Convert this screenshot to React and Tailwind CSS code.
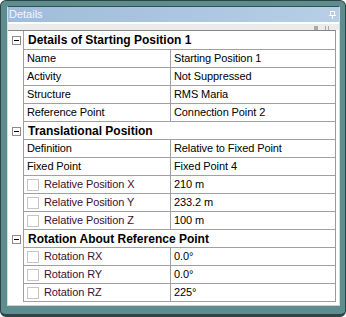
const sections = [
  {
    title: "Details of Starting Position 1",
    rows: [
      { name: "Name", value: "Starting Position 1" },
      { name: "Activity", value: "Not Suppressed" },
      { name: "Structure", value: "RMS Maria" },
      { name: "Reference Point", value: "Connection Point 2" },
    ],
  },
  {
    title: "Translational Position",
    rows: [
      { name: "Definition", value: "Relative to Fixed Point" },
      { name: "Fixed Point", value: "Fixed Point 4" },
      { name: "Relative Position X", value: "210 m", check: true },
      { name: "Relative Position Y", value: "233.2 m", check: true },
      { name: "Relative Position Z", value: "100 m", check: true },
    ],
  },
  {
    title: "Rotation About Reference Point",
    rows: [
      { name: "Rotation RX", value: "0.0°", check: true },
      { name: "Rotation RY", value: "0.0°", check: true },
      { name: "Rotation RZ", value: "225°", check: true },
    ],
  },
];

function MinusBox() {
  return (
    <div className="w-[9px] h-[9px] border border-[#8c8c8c] bg-white flex items-center justify-center">
      <div className="w-[5px] h-px bg-black" />
    </div>
  );
}

function PinIcon() {
  return (
    <svg width="7" height="8" viewBox="0 0 7 8" fill="none" stroke="#ffffff" strokeWidth="1" shapeRendering="crispEdges">
      <path d="M1.5 0.5h4v4h-4z" />
      <path d="M0 4.5h7" />
      <path d="M3.5 5v3" />
    </svg>
  );
}

function HeaderRow({ title, first }) {
  return (
    <div className={`flex ${first ? "h-[19px]" : "h-[18px]"}`}>
      <div className="w-[15px] shrink-0 flex items-center justify-end pr-[2px]">
        <MinusBox />
      </div>
      <div className="flex-1 flex items-center border-l border-b border-[#a0a0a0] pl-[4px] text-[12px] font-bold text-black leading-none">
        {title}
      </div>
    </div>
  );
}

function DataRow({ name, value, check }) {
  return (
    <div className="flex h-[18px]">
      <div className="w-[15px] shrink-0" />
      <div className="flex-1 flex border-l border-b border-[#a0a0a0] text-[11px] leading-none tracking-[-0.1px]">
        <div className="w-[147px] shrink-0 flex items-center border-r border-[#a0a0a0] pl-[3px]">
          {check ? (
            <>
              <div className="w-[12px] h-[12px] border border-[#c4c4c4] bg-white shrink-0" />
              <span className="ml-[5px] text-[#3d0f33]">{name}</span>
            </>
          ) : (
            <span className="text-black">{name}</span>
          )}
        </div>
        <div className="flex-1 flex items-center pl-[3px] text-black">{value}</div>
      </div>
    </div>
  );
}

export default function App() {
  return (
    <div className="w-[346px] h-[317px] bg-white font-['Liberation_Sans',Arial,sans-serif]">
      <div className="w-full h-full rounded-[6px] border border-b-[3px] border-[#2e4446] bg-[#5e8d8f] pt-[5px] pl-[6px] pr-[5px] pb-[8px]">
        <div className="h-[300px] flex flex-col bg-white border-t border-t-[#34504f] border-x border-b border-x-[#d2dede] border-b-[#c8d4d4]">
          {/* title bar */}
          <div className="h-[15px] shrink-0 flex items-center justify-between bg-linear-to-r from-[#a0bcda] to-[#b7cee6] pl-[1px] pr-[3px]">
            <span className="text-[11px] leading-none text-[#f4f8fc]">Details</span>
            <PinIcon />
          </div>
          <div className="h-[2px] shrink-0 bg-white" />
          {/* grip strip */}
          <div className="h-[6px] shrink-0 bg-[#ebebeb] flex items-end justify-end pr-[10px]">
            <div className="w-[4px] h-[4px] bg-[#a8a8a8]" />
            <div className="w-px h-[4px] bg-[#a8a8a8] ml-[7px]" />
            <div className="w-px h-[4px] bg-[#a8a8a8] ml-[2px]" />
          </div>
          {/* property grid */}
          <div className="mr-[3px] border-t border-r border-t-[#858585] border-r-[#9a9a9a] flex flex-col">
            {sections.map((s, i) => (
              <div key={s.title} className="flex flex-col">
                <HeaderRow title={s.title} first={i === 0} />
                {s.rows.map((r) => (
                  <DataRow key={r.name} {...r} />
                ))}
              </div>
            ))}
          </div>
          <div className="flex-1 bg-white" />
        </div>
      </div>
    </div>
  );
}
